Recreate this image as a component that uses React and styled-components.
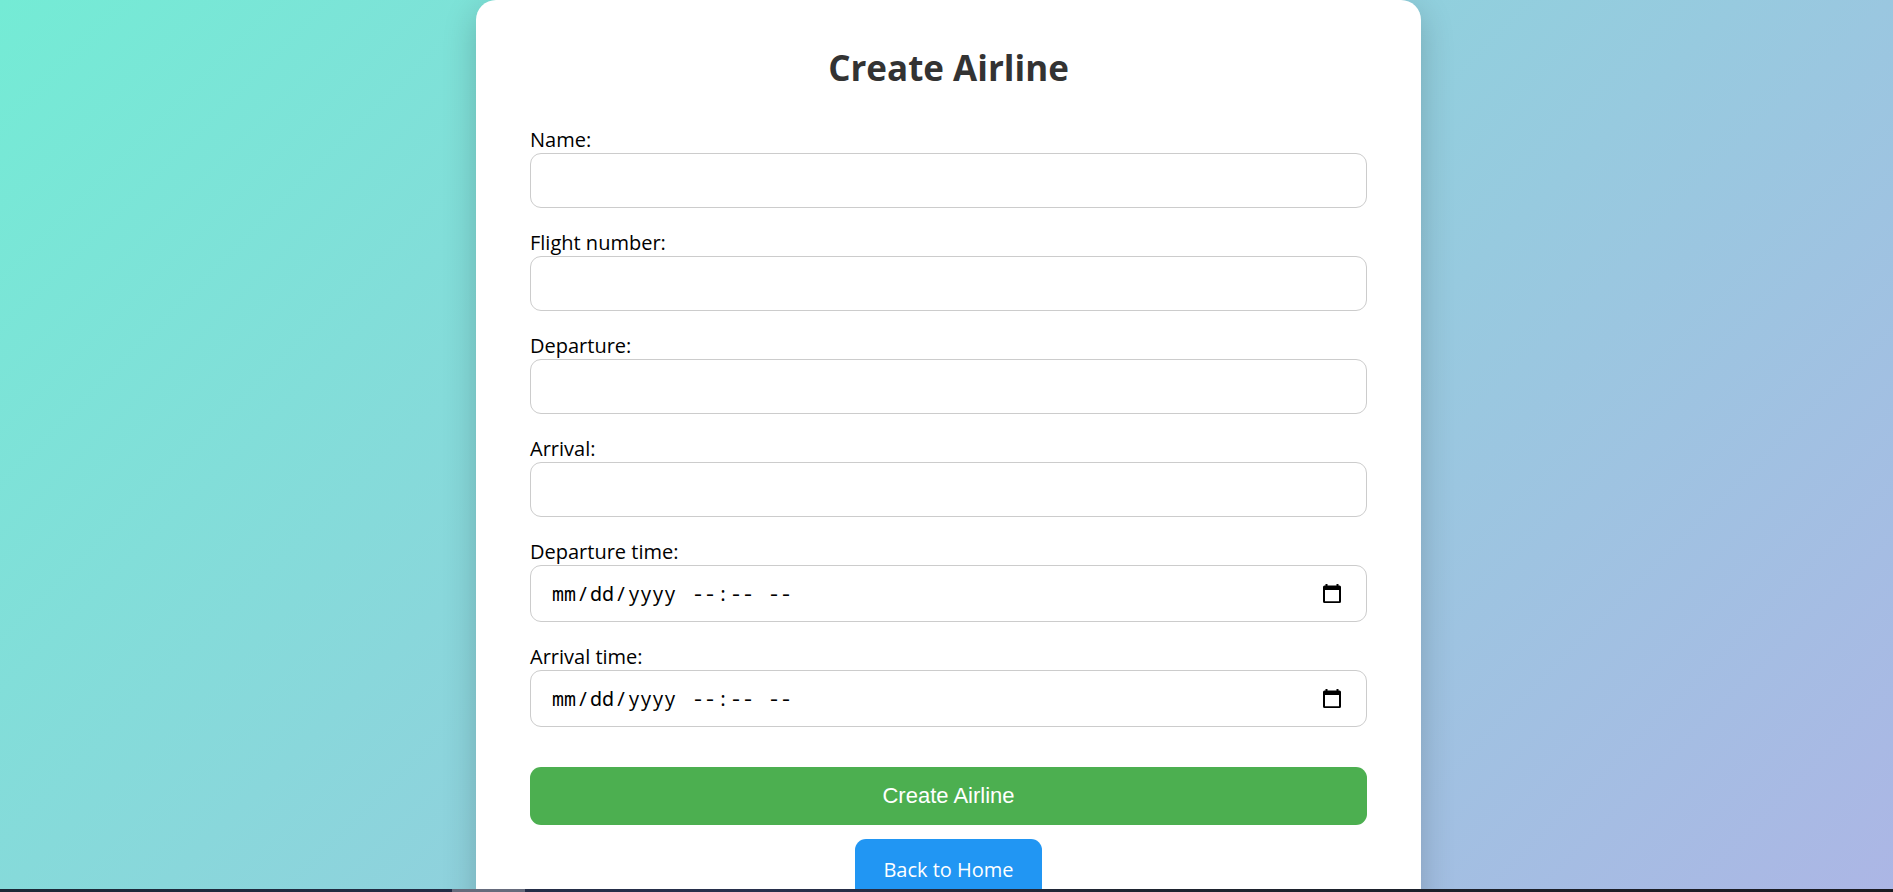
import React, { useRef } from "react";
import styled, { createGlobalStyle } from "styled-components";

const GlobalStyle = createGlobalStyle`
  * { box-sizing: border-box; }
  body { margin: 0; font-family: "Segoe UI", "Open Sans", "Noto Sans", sans-serif; }
`;

const Page = styled.div`
  display: flex;
  flex-direction: column;
  height: 100vh;
  overflow: hidden;
  background: linear-gradient(135deg, #74ebd5, #acb6e5);
`;

const Main = styled.main`
  flex: 1;
  min-height: 0;
  overflow: hidden;
  padding: 0 12px 0 16px;
`;

const Card = styled.form`
  display: flex;
  flex-direction: column;
  max-width: 945px;
  margin: 0 auto;
  padding: 40px 54px;
  border-radius: 20px;
  background: #fff;
  box-shadow: 0 10px 34px rgba(0, 0, 0, 0.2);
`;

const Title = styled.h1`
  margin: 0 0 30px;
  font-size: 35px;
  line-height: 56px;
  font-weight: 700;
  text-align: center;
  color: #333;
`;

const Fields = styled.div`
  display: flex;
  flex-direction: column;
  gap: 21px;
`;

const Field = styled.div`
  display: flex;
  flex-direction: column;
`;

const Label = styled.label`
  font-size: 20px;
  line-height: 27px;
  color: #000;
`;

const TextInput = styled.input`
  width: 100%;
  height: 55px;
  padding: 0 20px;
  border: 1px solid #ccc;
  border-radius: 11px;
  background: #fff;
  color: #000;
  font-family: inherit;
  font-size: 20px;
`;

const DateTimeBox = styled.div`
  display: flex;
  align-items: center;
  gap: 12px;
  height: 57px;
  padding: 0 25px 0 20px;
  border: 1px solid #ccc;
  border-radius: 11px;
  background: #fff;
`;

const DatePart = styled.input`
  width: ${({ type }) => (type === "date" ? "128px" : "auto")};
  padding: 0;
  border: 0;
  background: transparent;
  color: #000;
  font-family: "Noto Sans Mono", "Liberation Mono", monospace;
  font-size: 20px;

  &::-webkit-calendar-picker-indicator {
    display: none;
  }
`;

const PickerButton = styled.button`
  display: flex;
  margin-left: auto;
  padding: 0;
  border: 0;
  background: transparent;
  color: #000;
  cursor: pointer;
`;

const SubmitButton = styled.button`
  height: 58px;
  margin-top: 40px;
  border: 0;
  border-radius: 11px;
  background: #4caf50;
  color: #fff;
  font-family: "Liberation Sans", Arial, sans-serif;
  font-size: 22px;
  cursor: pointer;
`;

const HomeLink = styled.a`
  align-self: center;
  margin-top: 14px;
  padding: 16px 28px;
  border-radius: 11px;
  background: #2196f3;
  color: #fff;
  font-size: 20px;
  line-height: 29px;
  text-decoration: none;
`;

const BottomBar = styled.footer`
  display: flex;
  flex: none;
  height: 3px;
  background: linear-gradient(90deg, #1b2836, #222c45 24%, #28304d 40%, #1e2430 60%, #1b1b22);
`;

const BarHighlight = styled.div`
  width: 73px;
  margin-left: 452px;
  background: #666b7c;
`;

function CalendarIcon() {
  return (
    <svg width="18" height="20" viewBox="0 0 18 20" fill="currentColor" aria-hidden="true">
      <path
        fillRule="evenodd"
        d="M2.500 0h2v1.500h9V0h2v1.500h1a1.500 1.500 0 0 1 1.500 1.500v14.500a1.500 1.500 0 0 1-1.500 1.500h-15A1.500 1.500 0 0 1 0 17.500V3a1.500 1.500 0 0 1 1.500-1.500h1zM2 6v11.300h14V6z"
      />
    </svg>
  );
}

function DateTimeInput({ id, label }) {
  const dateRef = useRef(null);
  return (
    <DateTimeBox>
      <DatePart ref={dateRef} id={id} name={id} type="date" />
      <DatePart name={`${id}-clock`} type="time" aria-label={`${label} clock`} />
      <PickerButton
        type="button"
        aria-label="Open calendar"
        onClick={() => dateRef.current?.showPicker()}
      >
        <CalendarIcon />
      </PickerButton>
    </DateTimeBox>
  );
}

const fields = [
  { id: "name", label: "Name" },
  { id: "flight", label: "Flight number" },
  { id: "departure", label: "Departure" },
  { id: "arrival", label: "Arrival" },
  { id: "departure-time", label: "Departure time", dateTime: true },
  { id: "arrival-time", label: "Arrival time", dateTime: true },
];

export default function App() {
  return (
    <Page>
      <GlobalStyle />
      <Main>
        <Card onSubmit={(event) => event.preventDefault()}>
          <Title>Create Airline</Title>
          <Fields>
            {fields.map(({ id, label, dateTime }) => (
              <Field key={id}>
                <Label htmlFor={id}>{`${label}:`}</Label>
                {dateTime ? (
                  <DateTimeInput id={id} label={label} />
                ) : (
                  <TextInput id={id} name={id} type="text" />
                )}
              </Field>
            ))}
          </Fields>
          <SubmitButton type="submit">Create Airline</SubmitButton>
          <HomeLink href="#home">Back to Home</HomeLink>
        </Card>
      </Main>
      <BottomBar>
        <BarHighlight />
      </BottomBar>
    </Page>
  );
}
